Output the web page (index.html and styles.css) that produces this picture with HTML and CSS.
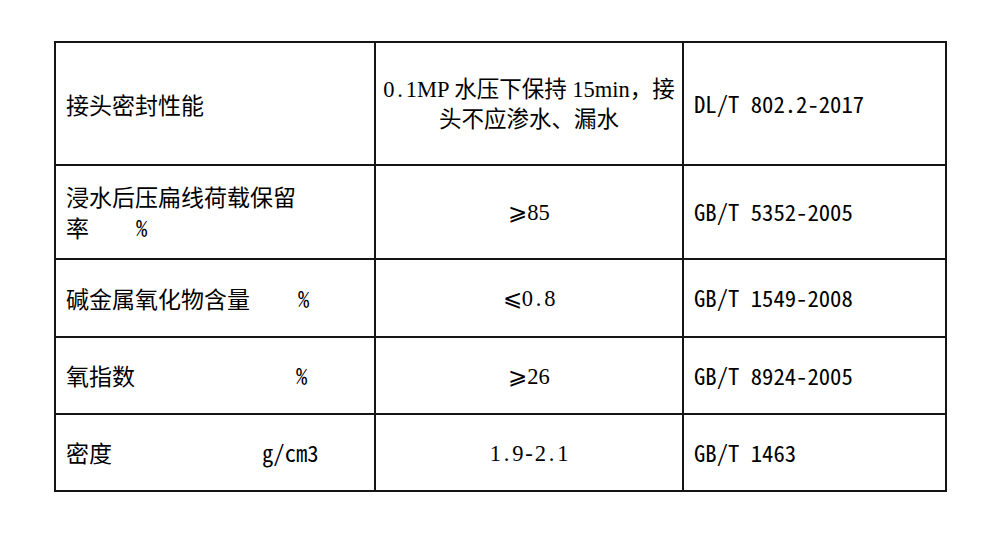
FILE: index.html
```html
<!DOCTYPE html>
<html lang="zh-CN">
<head>
<meta charset="utf-8">
<title>技术参数</title>
<link rel="stylesheet" href="styles.css">
</head>
<body>
<div class="spec-table">
  <div class="cell name"><span>接头密封性能</span></div>
  <div class="cell value"><span>0<span class="hw">.</span>1MP 水压下保持 15min，接<br>头不应渗水、漏水</span></div>
  <div class="cell std"><span>DL/T 802.2-2017</span></div>

  <div class="cell name"><span class="two">浸水后压扁线荷载保留<br>率<span class="unit u-r2">%</span></span></div>
  <div class="cell value"><span>⩾85</span></div>
  <div class="cell std"><span>GB/T 5352-2005</span></div>

  <div class="cell name"><span>碱金属氧化物含量<span class="unit u-r3">%</span></span></div>
  <div class="cell value"><span>⩽0<span class="hw">.</span>8</span></div>
  <div class="cell std"><span>GB/T 1549-2008</span></div>

  <div class="cell name"><span>氧指数<span class="unit u-r4">%</span></span></div>
  <div class="cell value"><span>⩾26</span></div>
  <div class="cell std"><span>GB/T 8924-2005</span></div>

  <div class="cell name"><span>密度<span class="unit u-r5">g/cm3</span></span></div>
  <div class="cell value"><span>1<span class="hw">.</span>9<span class="hw">-</span>2<span class="hw">.</span>1</span></div>
  <div class="cell std"><span>GB/T 1463</span></div>
</div>
</body>
</html>
```

FILE: styles.css
```css
html, body {
  margin: 0;
  padding: 0;
  background: #ffffff;
}

body {
  color: #000000;
  font-family: "Noto Sans CJK SC", "Noto Sans", sans-serif;
  font-size: 22.5px;
}

.spec-table {
  display: grid;
  grid-template-columns: 320px 308px 263px;
  grid-template-rows: 123px 94px 78px 77px 77px;
  width: max-content;
  margin: 41px 0 0 54px;
  border-left: 2px solid #151515;
  border-top: 2px solid #151515;
}

.cell {
  box-sizing: border-box;
  display: flex;
  align-items: center;
  border-right: 2px solid #151515;
  border-bottom: 2px solid #151515;
  line-height: 30px;
}

.name {
  padding-left: 10px;
  font-family: "Noto Sans CJK SC", sans-serif;
  font-size: 23px;
  font-weight: 400;
}

.two {
  line-height: 31px;
}

.unit {
  font-family: "Noto Sans Mono CJK SC", "DejaVu Sans Mono", monospace;
  font-size: 22.7px;
}

.u-r2 { margin-left: 47px; }
.u-r3 { margin-left: 48px; }
.u-r4 { margin-left: 161px; }
.u-r5 { margin-left: 150px; }

.value {
  justify-content: center;
  text-align: center;
  font-family: "Liberation Serif", "Noto Sans CJK SC", serif;
  padding-top: 2px;
}

.hw {
  display: inline-block;
  width: 0.5em;
  text-align: center;
}

.std {
  padding-left: 10px;
  font-family: "Noto Sans Mono CJK SC", "DejaVu Sans Mono", monospace;
  font-size: 22.7px;
  font-weight: 400;
}
```
